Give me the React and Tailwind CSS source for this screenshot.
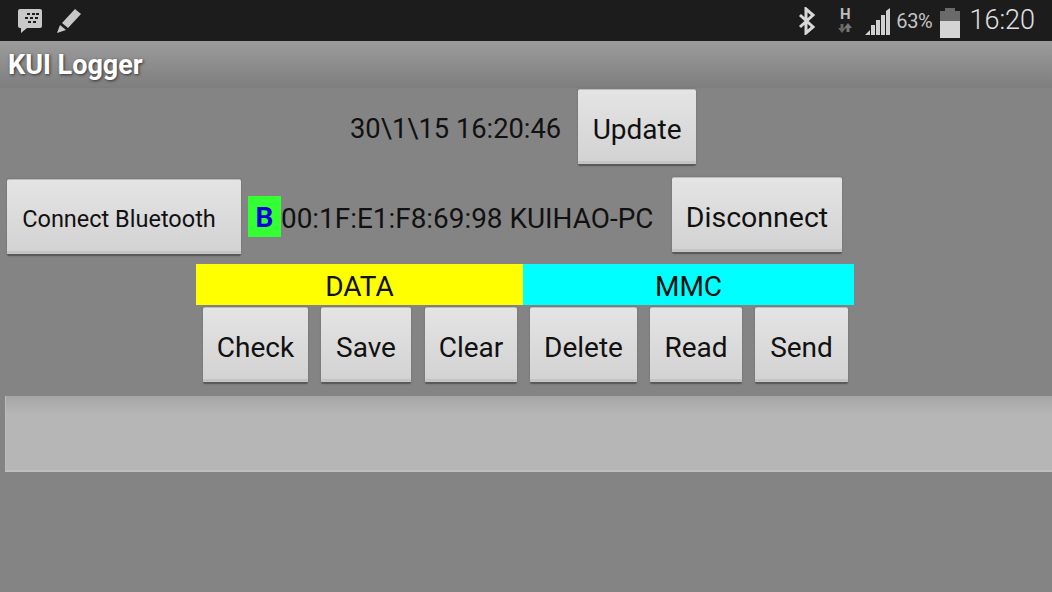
import React from 'react';

function HoloButton({ label, className }) {
    return (
        <button className={`h-[77px] shrink-0 rounded-[2px] pt-[6px] bg-gradient-to-b from-[#e4e4e4] to-[#d2d2d2] border-t border-t-[#bcbcbc] border-b-2 border-b-[#5a5a5a] shadow-[0_0_2px_#666,inset_0_-3px_0_#c4c4c4] text-[#111] text-center whitespace-nowrap ${className}`}>
            {label}
        </button>
    );
}

function StatusBar() {
    return (
        <div className="h-[41px] bg-[#1c1c1c] flex items-center text-[#c8c8c8]">
            <svg width="26" height="26" viewBox="0 0 26 26" className="ml-[17px]">
                <path d="M3 1h20a2 2 0 0 1 2 2v15a2 2 0 0 1-2 2H10l-6 5v-5H3a2 2 0 0 1-2-2V3a2 2 0 0 1 2-2z" fill="#c8c8c8" />
                <g fill="#1c1c1c">
                    <rect x="10" y="5" width="3" height="2" /><rect x="15" y="5" width="3" height="2" /><rect x="19" y="5" width="3" height="2" />
                    <rect x="8" y="9" width="3" height="2" /><rect x="13" y="9" width="3" height="2" /><rect x="18" y="9" width="3" height="2" />
                    <rect x="11" y="13" width="3" height="2" /><rect x="16" y="13" width="3" height="2" />
                </g>
            </svg>
            <svg width="28" height="28" viewBox="0 0 28 28" className="ml-[12px] mb-[3px]">
                <path d="M7 18 L20 4 L26 9 L13 23 Z" fill="#c8c8c8" />
                <path d="M5 20 L11 25 L2 28 Z" fill="#c8c8c8" />
            </svg>
            <svg width="22" height="28" viewBox="0 0 22 28" className="ml-auto mr-[4px]">
                <path d="M4 8 L17 20 L10 26 V2 L17 8 L4 20" fill="none" stroke="#d8d8d8" strokeWidth="3" />
            </svg>
            <div className="ml-[14px] w-[18px] flex flex-col items-center leading-none">
                <span className="text-[15px] font-bold text-[#bdbdbd]">H</span>
                <svg width="16" height="12" viewBox="0 0 16 12">
                    <path d="M5 11 L1 6 H3.5 V2 H6.5 V6 H9 Z" fill="#666" />
                    <path d="M11 1 L15 6 H12.5 V10 H9.5 V6 H7 Z" fill="#777" />
                </svg>
            </div>
            <svg width="26" height="28" viewBox="0 0 26 28" className="ml-[11px] mt-[3px]" fill="#d0d0d0">
                <path d="M0 27 L5 22 V27 Z" />
                <rect x="6" y="17" width="4" height="10" />
                <rect x="11" y="12" width="4" height="15" />
                <rect x="16" y="7" width="4" height="20" />
                <path d="M21 27 V3 L25 0 V27 Z" />
            </svg>
            <span className="ml-[5px] text-[20px] tracking-[-0.3px] text-[#c4c4c4]">63%</span>
            <div className="ml-[8px] mt-[5px] w-[20px] h-[30px] flex flex-col items-center">
                <div className="w-[10px] h-[3px] bg-[#6a6a6a]" />
                <div className="w-[20px] h-[10px] bg-[#6a6a6a]" />
                <div className="w-[20px] h-[17px] bg-[#d4d4d4]" />
            </div>
            <span className="ml-[9px] mr-[17px] text-[27px] font-light text-[#e0e0e0]">16:20</span>
        </div>
    );
}

export default function App() {
    return (
        <div className="w-[1052px] h-[592px] overflow-hidden bg-[#848484] font-['Roboto',sans-serif]">
            <StatusBar />
            <div className="h-[47px] bg-gradient-to-b from-[#9c9c9c] to-[#7e7e7e] flex items-center pl-[8px] pt-[2px]">
                <span className="text-[27px] font-bold text-white [text-shadow:1px_1px_3px_#333]">KUI Logger</span>
            </div>

            <div className="flex items-center h-[77px] mt-[1px]">
                <span className="ml-[350px] mt-[4px] text-[27.3px] text-[#111] whitespace-nowrap">{'30\\1\\15 16:20:46'}</span>
                <HoloButton label="Update" className="ml-[17px] w-[118px] text-[28px]" />
            </div>

            <div className="flex items-start h-[79px] mt-[11px]">
                <HoloButton label="Connect Bluetooth" className="mt-[2px] ml-[7px] w-[234px] pr-[10px] text-[23.5px]" />
                <div className="mt-[19px] ml-[7px] w-[33px] h-[41px] pt-[2px] bg-[#33ff33] text-[#0000dd] text-[28px] font-bold flex items-center justify-center">B</div>
                <span className="mt-[21px] w-[373px] text-[27.9px] text-[#111] whitespace-nowrap">00:1F:E1:F8:69:98 KUIHAO-PC</span>
                <HoloButton label="Disconnect" className="ml-[18px] w-[170px] text-[28.5px]" />
            </div>

            <div className="flex h-[41px] mt-[8px] ml-[196px] text-[28px] text-[#111]">
                <div className="w-[327px] bg-[#ffff00] flex items-center justify-center pt-[5px]">DATA</div>
                <div className="w-[331px] bg-[#00ffff] flex items-center justify-center pt-[5px]">MMC</div>
            </div>

            <div className="flex mt-[2px] ml-[203px] text-[28px]">
                <HoloButton label="Check" className="w-[105px]" />
                <HoloButton label="Save" className="ml-[13px] w-[90px]" />
                <HoloButton label="Clear" className="ml-[14px] w-[92px]" />
                <HoloButton label="Delete" className="ml-[13px] w-[107px]" />
                <HoloButton label="Read" className="ml-[13px] w-[92px]" />
                <HoloButton label="Send" className="ml-[13px] w-[93px]" />
            </div>

            <div className="h-[76px] mt-[12px] ml-[5px] bg-gradient-to-b from-[#a6a6a6] via-[#b6b6b6] via-25% to-[#b6b6b6] border-b-2 border-b-[#c0c0c0] border-l border-l-[#bcbcbc]" />
        </div>
    );
}
